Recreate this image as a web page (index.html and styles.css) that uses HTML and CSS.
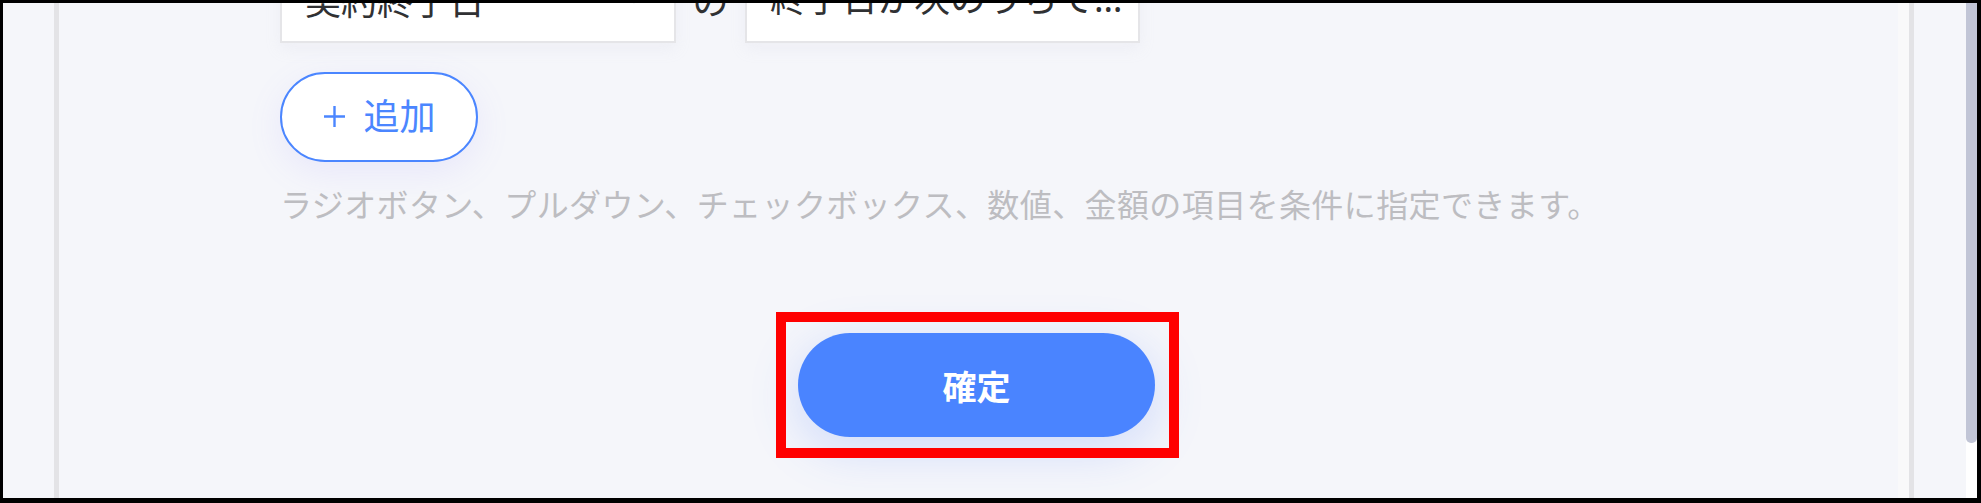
FILE: index.html
```html
<!DOCTYPE html>
<html lang="ja">
<head>
<meta charset="utf-8">
<title>条件設定</title>
<link rel="stylesheet" href="styles.css">
</head>
<body>
<div class="frame">
  <div class="main">
    <div class="panel">
      <div class="form">
        <div class="cond-row">
          <div class="select select-field">
            <span class="select-text">契約終了日</span>
            <svg class="chevron" width="14" height="9" viewBox="0 0 14 9"><path d="M1.5 1.5 L7 7 L12.5 1.5" fill="none" stroke="#b9bcc4" stroke-width="2"/></svg>
          </div>
          <span class="joiner">の</span>
          <div class="select select-cond">
            <span class="select-text">終了日が次のうちでいずれかに一致する</span>
          </div>
        </div>
        <button class="add-btn" type="button">
          <svg class="plus" width="25" height="25" viewBox="0 0 25 25"><path d="M12.5 2 V23 M2 12.5 H23" stroke="#4b86ff" stroke-width="2.4" fill="none"/></svg>
          <span>追加</span>
        </button>
        <p class="help">ラジオボタン、プルダウン、チェックボックス、数値、金額の項目を条件に指定できます。</p>
      </div>
      <div class="footer">
        <div class="confirm-wrap">
          <button class="confirm" type="button">確定</button>
          <span class="annotation"></span>
        </div>
      </div>
    </div>
  </div>
  <div class="scrollbar"><div class="thumb"></div></div>
</div>
</body>
</html>
```

FILE: styles.css
```css
html, body {
  margin: 0;
  padding: 0;
  background: #f5f6fa;
}

.frame {
  display: flex;
  height: 503px;
  box-sizing: border-box;
  border-style: solid;
  border-color: #000;
  border-width: 3px 4px 5px 3px;
  overflow: hidden;
  background: #f5f6fa;
  font-family: "Noto Sans CJK JP", "Noto Sans", sans-serif;
}

.main {
  flex: 1;
  display: flex;
  min-width: 0;
}

.panel {
  flex: 1;
  margin: 0 52px 0 51px;
  border-left: 5px solid #e3e3e6;
  border-right: 5px solid #e3e3e6;
  box-shadow: inset -11px 0 0 #f9f9fa;
}

.form {
  margin-top: -48px;
  padding-left: 221px;
}

.cond-row {
  display: flex;
  align-items: center;
}

.select {
  height: 88px;
  box-sizing: border-box;
  border: 2px solid #e5e5e8;
  background: #fff;
  display: flex;
  align-items: center;
  font-size: 36px;
  color: #303133;
  box-shadow: 0 6px 14px rgba(200, 204, 220, 0.15);
}

.select-field {
  width: 396px;
  padding: 0 33px 0 23px;
}

.select-cond {
  width: 395px;
  padding: 0 12px 0 23px;
}

.select-text {
  flex: 1;
  min-width: 0;
  overflow: hidden;
  white-space: nowrap;
  text-overflow: ellipsis;
  line-height: 52px;
  font-family: "Noto Sans CJK JP", sans-serif;
}

.select-cond .select-text {
  font-family: "Noto Sans", "Noto Sans CJK JP", sans-serif;
}

.chevron {
  flex: none;
  display: block;
}

.joiner {
  width: 37px;
  margin: 0 16px;
  font-size: 36px;
  color: #303133;
  text-align: center;
}

.add-btn {
  margin-top: 29px;
  width: 198px;
  height: 90px;
  box-sizing: border-box;
  border: 2px solid #4b86ff;
  border-radius: 45px;
  background: #fff;
  color: #4b86ff;
  font-family: "Noto Sans CJK JP", sans-serif;
  font-size: 36px;
  display: flex;
  align-items: center;
  justify-content: center;
  padding: 0 0 6px 0;
  box-shadow: 0 10px 34px rgba(150, 130, 255, 0.12);
}

.plus {
  display: block;
  margin-right: 16px;
  margin-top: 4px;
}

.help {
  margin: 18px 0 0;
  font-size: 32px;
  line-height: 46px;
  letter-spacing: 0.4px;
  color: #bdbdc1;
}

.footer {
  display: flex;
  justify-content: center;
  padding-right: 15px;
  margin-top: 107px;
}

.confirm-wrap {
  position: relative;
}

.confirm {
  display: block;
  width: 357px;
  height: 104px;
  border: none;
  border-radius: 52px;
  background: #4a84ff;
  color: #fff;
  font-family: "Noto Sans CJK JP", sans-serif;
  font-size: 34px;
  font-weight: 700;
  box-shadow: 0 12px 50px rgba(70, 120, 255, 0.22);
}

.annotation {
  position: absolute;
  top: -21px;
  left: -22px;
  right: -24px;
  bottom: -21px;
  border: 10px solid #ff0000;
  pointer-events: none;
}

.scrollbar {
  width: 11px;
  flex: none;
  background: #fff;
}

.thumb {
  height: 440px;
  background: #c1c5d6;
  border-radius: 0 0 5px 5px;
}
```
